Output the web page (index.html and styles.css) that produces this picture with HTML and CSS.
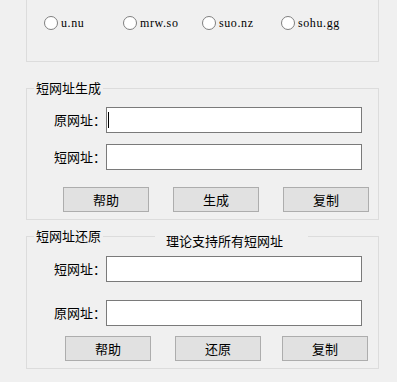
FILE: index.html
```html
<!DOCTYPE html>
<html lang="zh-CN">
<head>
    <meta charset="UTF-8">
    <meta name="viewport" content="width=device-width, initial-scale=1.0">
    <title>短网址工具</title>
    <link rel="stylesheet" href="styles.css">
</head>
<body>
    <div class="window">
        <!-- 服务选择 -->
        <div class="provider-box">
            <div class="radio-row">
                <label class="radio"><input type="radio" name="service"><span>u.nu</span></label>
                <label class="radio"><input type="radio" name="service"><span>mrw.so</span></label>
                <label class="radio"><input type="radio" name="service"><span>suo.nz</span></label>
                <label class="radio"><input type="radio" name="service"><span>sohu.gg</span></label>
            </div>
        </div>

        <!-- 短网址生成 -->
        <fieldset class="group gen">
            <legend>短网址生成</legend>
            <div class="field">
                <label for="genLong">原网址：</label>
                <input type="text" id="genLong" class="caret">
            </div>
            <div class="field">
                <label for="genShort">短网址：</label>
                <input type="text" id="genShort">
            </div>
            <div class="btn-row">
                <button class="btn">帮助</button>
                <button class="btn">生成</button>
                <button class="btn">复制</button>
            </div>
        </fieldset>

        <!-- 短网址还原 -->
        <div class="restore-wrap">
            <fieldset class="group restore">
                <legend>短网址还原</legend>
                <div class="field">
                    <label for="resShort">短网址：</label>
                    <input type="text" id="resShort">
                </div>
                <div class="field">
                    <label for="resLong">原网址：</label>
                    <input type="text" id="resLong">
                </div>
                <div class="btn-row">
                    <button class="btn">帮助</button>
                    <button class="btn">还原</button>
                    <button class="btn">复制</button>
                </div>
            </fieldset>
            <span class="note">理论支持所有短网址</span>
        </div>
    </div>
</body>
</html>
```

FILE: styles.css
```css
:root {
    --window-bg: #f0f0f0;
    --group-border: #dcdcdc;
    --input-border: #7a7a7a;
    --btn-bg: #e1e1e1;
    --btn-border: #adadad;
    --text-color: #000;
}

* {
    box-sizing: border-box;
    margin: 0;
    padding: 0;
}

html,
body {
    background: var(--window-bg);
}

body {
    width: 397px;
    height: 382px;
    overflow: hidden;
    font-family: "Noto Sans CJK SC", "Noto Sans", sans-serif;
    font-size: 13px;
    color: var(--text-color);
}

.window {
    padding-left: 26px;
}

/* 顶部服务选择 */
.provider-box {
    width: 353px;
    height: 82px;
    margin-top: -20px;
    padding: 34px 0 0 17px;
    border: 1px solid var(--group-border);
}

.radio-row {
    display: grid;
    grid-template-columns: repeat(4, 79px);
    height: 16px;
}

.radio {
    display: flex;
    align-items: center;
    font-family: "Liberation Serif", "Times New Roman", serif;
    font-size: 12px;
    letter-spacing: 0.6px;
    line-height: 16px;
}

.radio input {
    appearance: none;
    -webkit-appearance: none;
    width: 14px;
    height: 14px;
    margin-right: 3px;
    border: 1px solid #7f7f7f;
    border-radius: 50%;
    background: #fff;
}

/* 分组框 */
.group {
    width: 353px;
    min-width: 0;
    border: 1px solid var(--group-border);
}

.group legend {
    margin-left: 7px;
    padding: 0 2px;
    font-size: 13px;
    line-height: 16px;
}

.gen {
    margin-top: 18px;
    padding: 11px 0 7px;
}

.field {
    display: flex;
    align-items: center;
}

.field label {
    width: 79px;
    text-align: right;
    line-height: 16px;
}

.field input {
    width: 256px;
    height: 26px;
    padding: 0 2px;
    border: 1px solid var(--input-border);
    background: #fff;
    font-family: inherit;
    font-size: 13px;
    outline: none;
}

/* 输入框中的光标 */
.field input.caret {
    background: #fff linear-gradient(#000, #000) no-repeat 1px 4px / 1px 16px;
}

.gen .field + .field {
    margin-top: 11px;
}

.btn-row {
    display: flex;
    gap: 24px;
}

.btn {
    width: 86px;
    height: 25px;
    border: 1px solid var(--btn-border);
    background: var(--btn-bg);
    font-family: inherit;
    font-size: 13px;
    color: var(--text-color);
}

.gen .btn-row {
    margin-top: 17px;
    padding-left: 36px;
}

/* 还原 */
.restore-wrap {
    position: relative;
    margin-top: 8px;
}

.restore {
    padding: 12px 0 7px;
}

.restore .field + .field {
    margin-top: 18px;
}

.restore .btn-row {
    margin-top: 10px;
    padding-left: 38px;
}

.restore .btn:last-child {
    margin-left: -3px;
}

.note {
    position: absolute;
    top: 5px;
    left: 129px;
    width: 153px;
    padding-left: 11px;
    line-height: 16px;
    background: var(--window-bg);
}
```
